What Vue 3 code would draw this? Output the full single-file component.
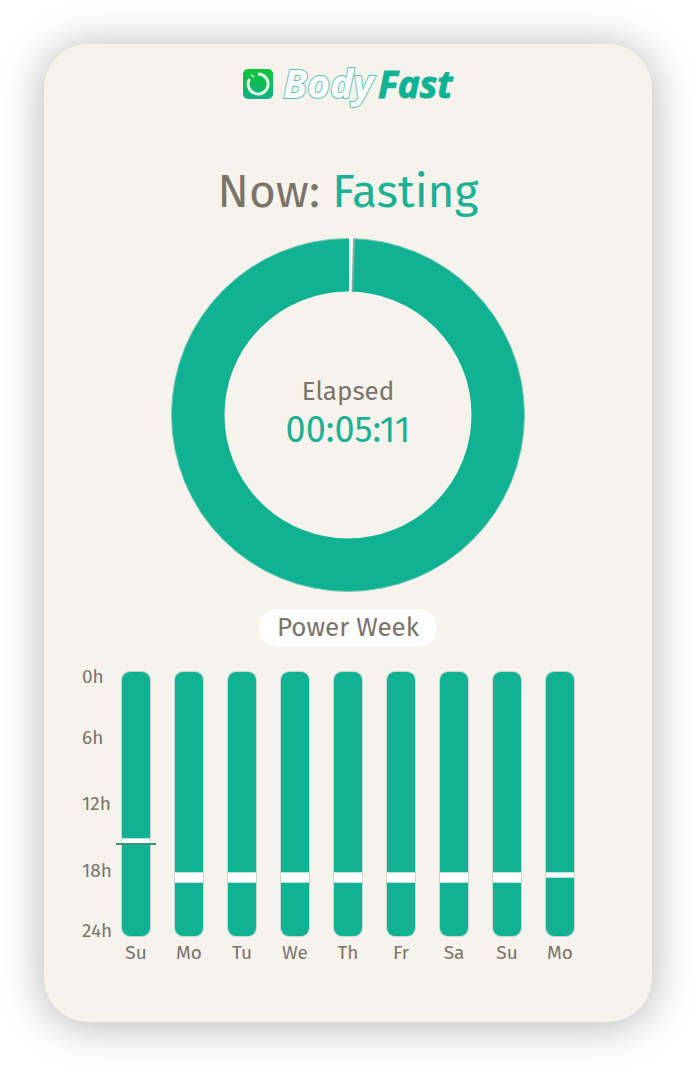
<script setup>
import { computed, ref } from 'vue'

const status = ref('Fasting')
const elapsed = ref('00:05:11')
const plan = ref('Power Week')

const hours = ['0h', '6h', '12h', '18h', '24h']

// Eating window of each day, in hours since midnight
const days = [
  { label: 'Su', start: 15.1, end: 15.7, now: 15.5 },
  { label: 'Mo', start: 18.2, end: 19.2 },
  { label: 'Tu', start: 18.2, end: 19.2 },
  { label: 'We', start: 18.2, end: 19.2 },
  { label: 'Th', start: 18.2, end: 19.2 },
  { label: 'Fr', start: 18.2, end: 19.2 },
  { label: 'Sa', start: 18.2, end: 19.2 },
  { label: 'Su', start: 18.2, end: 19.2 },
  { label: 'Mo', start: 18.2, end: 18.7 }
]

const bars = computed(() =>
  days.map((day) => ({
    ...day,
    before: { flexGrow: day.start },
    eating: { flexGrow: day.end - day.start },
    after: { flexGrow: 24 - day.end },
    marker: day.now ? { top: `${(day.now / 24) * 100}%` } : null
  }))
)
</script>

<template>
  <main class="card">
    <svg class="logo" viewBox="0 0 212 46" role="img" aria-label="BodyFast">
      <defs>
        <linearGradient id="badge" x1="0" y1="0" x2="0" y2="1">
          <stop offset="0" stop-color="#0cc53c" />
          <stop offset="0.5" stop-color="#0fbb55" />
          <stop offset="1" stop-color="#10b08c" />
        </linearGradient>
      </defs>
      <rect x="1" y="3" width="30" height="30" rx="5" fill="url(#badge)" />
      <path d="M16 8A10 10 0 1 1 7.500 13" fill="none" stroke="#e4f8e9" stroke-width="3" />
      <path d="M9 8.500L12 11.500" stroke="#8fe3a0" stroke-width="2" />
      <text class="logo-body" x="41" y="32">Body</text>
      <text class="logo-fast" x="136" y="32">Fast</text>
    </svg>

    <h1 class="title">Now: <span class="accent">{{ status }}</span></h1>

    <section class="ring">
      <svg class="ring-chart" viewBox="0 0 354 354" aria-hidden="true">
        <circle cx="177" cy="177" r="150" fill="none" stroke="#11b294" stroke-width="53" />
        <circle cx="177" cy="177" r="176.5" fill="none" stroke="#7fc9b8" stroke-width="1" />
        <path d="M178 0H184L182 54H178Z" fill="#95aaa2" />
        <path d="M178 0H182L180.500 54H178Z" fill="#ffffff" />
      </svg>
      <div class="ring-text">
        <span class="ring-label">Elapsed</span>
        <span class="ring-time">{{ elapsed }}</span>
      </div>
    </section>

    <p class="plan">{{ plan }}</p>

    <section class="week">
      <div class="axis">
        <span v-for="hour in hours" :key="hour" class="tick">{{ hour }}</span>
      </div>
      <div v-for="(bar, index) in bars" :key="index" class="day">
        <div class="bar">
          <div class="track">
            <div class="fasting" :style="bar.before"></div>
            <div class="eating" :style="bar.eating"></div>
            <div class="fasting" :style="bar.after"></div>
          </div>
          <div v-if="bar.marker" class="marker" :style="bar.marker"></div>
        </div>
        <span class="day-label">{{ bar.label }}</span>
      </div>
    </section>
  </main>
</template>

<style>
body {
  background: #ffffff;
}
</style>

<style scoped>
.card {
  margin: 44px;
  padding: 22px 38px 57px;
  display: flex;
  flex-direction: column;
  align-items: center;
  background: #f6f3ec;
  border-radius: 44px;
  box-shadow: 0 3px 44px rgba(0, 0, 0, 0.3);
  color: #7b746a;
  font-family: 'Fira Sans', 'Open Sans', 'Noto Sans', sans-serif;
}

.logo {
  width: 212px;
  height: 46px;
  overflow: visible;
}

.logo text {
  font-family: 'Open Sans', 'Noto Sans', sans-serif;
  font-weight: 700;
  font-style: italic;
}

.logo-body {
  font-size: 39px;
  fill: #ffffff;
  stroke: #5cc4b0;
  stroke-width: 2px;
  paint-order: stroke;
}

.logo-fast {
  font-size: 37px;
  fill: #11b294;
  stroke: #11b294;
  stroke-width: 1px;
}

.title {
  margin: 50px 0 16px;
  font-size: 46px;
  line-height: 60px;
  font-weight: 400;
}

.accent {
  color: #1cb094;
}

.ring {
  width: 354px;
  max-width: 100%;
  display: grid;
  place-items: center;
}

.ring-chart,
.ring-text {
  grid-area: 1 / 1;
}

.ring-chart {
  display: block;
  width: 100%;
}

.ring-text {
  padding-bottom: 6px;
  display: flex;
  flex-direction: column;
  align-items: center;
}

.ring-label {
  font-size: 26px;
  line-height: 36px;
}

.ring-time {
  color: #1cb094;
  font-size: 36px;
  line-height: 40px;
}

.plan {
  margin: 17px 0 24px;
  padding: 0 18px;
  border-radius: 19px;
  background: #ffffff;
  font-size: 26px;
  line-height: 38px;
}

.week {
  align-self: stretch;
  display: flex;
}

.axis {
  width: 39px;
  height: 266px;
  display: flex;
  flex-direction: column;
}

.tick {
  flex: 2 1 0;
  display: flex;
  align-items: center;
  font-size: 19px;
  line-height: 12px;
}

.tick:first-child {
  flex-grow: 1;
  align-items: flex-start;
}

.tick:last-child {
  flex-grow: 1;
  align-items: flex-end;
}

.day {
  width: 30px;
  margin-right: 23px;
  display: flex;
  flex-direction: column;
  align-items: center;
}

.day:last-child {
  margin-right: 0;
}

.bar {
  position: relative;
  width: 100%;
  height: 266px;
}

.track {
  box-sizing: border-box;
  height: 100%;
  display: flex;
  flex-direction: column;
  overflow: hidden;
  border: 1px solid #c9d5cf;
  border-radius: 9px;
}

.fasting {
  flex: 0 1 0;
  background: #11b294;
}

.eating {
  flex: 0 1 0;
  background: #ffffff;
  box-shadow: inset 0 1px #bfe3d9, inset 0 -1px #bfe3d9;
}

.marker {
  position: absolute;
  left: -5px;
  right: -5px;
  height: 2px;
  background: #3f8f79;
}

.day-label {
  margin-top: 4px;
  font-size: 19px;
  line-height: 24px;
}
</style>
